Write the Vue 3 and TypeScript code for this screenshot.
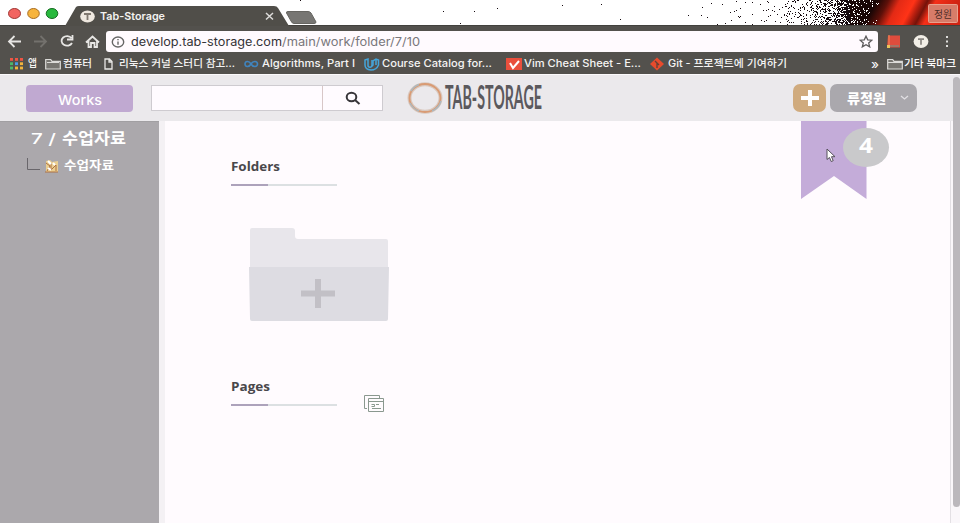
<script setup lang="ts">
import { h } from 'vue'

interface LabelProps { text: string; w: number; size: number; weight?: number; fill?: string; face?: string }

// Single-line label whose glyphs are fitted to a fixed width
const Label = (p: LabelProps) =>
  h('svg', { width: p.w, height: Math.round(p.size * 1.4), style: { overflow: 'visible', display: 'block', flex: 'none' } }, [
    h('text', {
      x: 0, y: Math.round(p.size * 1.06), textLength: p.w, lengthAdjust: 'spacingAndGlyphs',
      'font-size': p.size, 'font-weight': p.weight ?? 400, fill: p.fill ?? '#fff',
      'font-family': p.face ?? 'Inter, "Noto Sans CJK KR", sans-serif',
    }, p.text),
  ])
Label.props = ['text', 'w', 'size', 'weight', 'fill', 'face']

const bookmarks = [
  { icon: 'apps', text: '앱', w: 9 },
  { icon: 'dir', text: '컴퓨터', w: 29 },
  { icon: 'doc', text: '리눅스 커널 스터디 참고...', w: 116 },
  { icon: 'loop', text: 'Algorithms, Part I', w: 93 },
  { icon: 'udacity', text: 'Course Catalog for...', w: 110 },
  { icon: 'vim', text: 'Vim Cheat Sheet - E...', w: 117 },
  { icon: 'git', text: 'Git - 프로젝트에 기여하기', w: 119 },
]
const appColors = ['#ef5544', '#ef5544', '#ef5544', '#4bb86a', '#4a9ae8', '#f3b43c', '#4bb86a', '#f3b43c', '#f3b43c']

// Speckled wallpaper that fades from white into black
const dark: string[] = []
const light: string[] = []
let seed = 41
const rnd = () => ((seed = (seed * 16807) % 2147483647) / 2147483647)
for (let y = 0; y < 25; y++) {
  for (let x = 300; x < 880; x++) {
    const t = Math.max(0, Math.min(1, (x - 680) / 170))
    const p = 0.0012 + t * 0.03 + Math.pow(t, 6) * 0.75
    const r = rnd()
    if (x < 850 && r < p) dark.push(`M${x} ${y}h1v1h-1z`)
    if (x >= 838 && r > 1 - 0.32 * (1 - (x - 838) / 42)) light.push(`M${x} ${y}h1v1h-1z`)
  }
}
const darkPath = dark.join('')
const lightPath = light.join('')
</script>

<template>
  <div class="window">
    <div class="tabs">
      <svg width="960" height="26" viewBox="0 0 960 26">
        <defs>
          <linearGradient id="red" gradientUnits="userSpaceOnUse" x1="872" y1="10" x2="936" y2="44">
            <stop offset="0" stop-color="#190605" />
            <stop offset=".14" stop-color="#5d1009" />
            <stop offset=".28" stop-color="#e32a15" />
            <stop offset=".46" stop-color="#ff3317" />
            <stop offset=".54" stop-color="#b71f10" />
            <stop offset=".62" stop-color="#741209" />
            <stop offset=".72" stop-color="#f52f18" />
            <stop offset="1" stop-color="#cf2413" />
          </linearGradient>
        </defs>
        <path d="M0 0H960V26H0z" fill="#fff" />
        <path d="M850 0H960V26H850z" fill="#190706" />
        <path d="M872 0H960V26H860z" fill="url(#red)" />
        <path :d="darkPath" fill="#160b10" />
        <path :d="lightPath" fill="#fff" />
        <rect x="928.500" y="4.500" width="29" height="18" rx="1" fill="#d77c69" stroke="#e9a18e" />
        <path d="M0 25.500H960" stroke="#42413d" />
        <path d="M65 26L76 7Q77 6 79 6H274Q277 6 278 8L289 26z" fill="#504e49" />
        <path d="M288 11.500H308Q310 11.500 311 13L316 22Q316 23.500 314 23.500H294Q292 23.500 291 21L286.500 13Q286 11.500 288 11.500z" fill="#777673" stroke="#666561" />
        <g stroke-width="1">
          <ellipse cx="14.500" cy="13.500" rx="6" ry="5" fill="#f26460" stroke="#9f3632" />
          <ellipse cx="33.500" cy="13.500" rx="5.800" ry="5" fill="#f7b43c" stroke="#a76c20" />
          <ellipse cx="52" cy="13.500" rx="5.800" ry="5" fill="#28b93d" stroke="#176c23" />
        </g>
        <ellipse cx="87.500" cy="16.500" rx="7.300" ry="6" fill="#efe8df" />
        <path d="M84 14h7M87.500 14v6" stroke="#817970" stroke-width="1.800" />
        <path d="M266 13l7 6.500M273 13l-7 6.500" stroke="#dddcda" stroke-width="1.500" />
      </svg>
      <Label class="tab-title" text="Tab-Storage" :w="65" :size="10.500" :weight="600" fill="#f4f3f1" />
      <Label class="profile" text="정원" :w="18" :size="10" fill="#4d2d28" />
    </div>

    <div class="toolbar">
      <svg width="106" height="26" viewBox="0 0 106 26" fill="none" stroke="#e7e6e4" stroke-width="1.800">
        <path d="M21 15.500H9M14.500 10L9 15.500l5.500 5.500" />
        <path d="M34 15.500h12M40.500 10l5.500 5.500-5.500 5.500" stroke="#73716d" />
        <path d="M71.500 12A5.500 4.800 0 1 0 72 17M72.500 9v4.500H67" />
        <path d="M86 16.500l6.500-6 6.500 6M88.500 15v6h2.500v-4h3.500v4h2.500v-6" />
      </svg>
      <div class="address">
        <svg width="14" height="14" viewBox="0 0 14 14" fill="none" stroke="#666" stroke-width="1.400">
          <ellipse cx="7" cy="7" rx="5.700" ry="5" /><path d="M7 6.500v3.200M7 4v1.300" />
        </svg>
        <Label text="develop.tab-storage.com" :w="151" :size="11.500" fill="#343336" />
        <Label text="/main/work/folder/7/10" :w="138" :size="11.500" fill="#79777b" />
        <svg class="star" width="14" height="13" viewBox="0 0 14 13" fill="none" stroke="#5d5b5c" stroke-width="1.300">
          <path d="M7 1.200l1.700 3.600 4.200.4-3.200 2.700 1 4L7 9.800l-3.700 2.100 1-4L1.100 5.200l4.200-.4z" />
        </svg>
      </div>
      <svg class="extensions" width="80" height="26" viewBox="0 0 80 26">
        <path d="M10 9.500h12v12H9z" fill="#df4c3d" /><path d="M11 9v10" stroke="#f18c58" /><path d="M9 20h12" stroke="#8e8274" stroke-width="1.500" /><path d="M9 19h3v3H9z" fill="#ecc55a" />
        <ellipse cx="43" cy="15.500" rx="7.400" ry="6.400" fill="#f3efe7" /><path d="M40 13.200h6M43 13.200v5.500" stroke="#8a8782" stroke-width="1.700" />
        <path d="M68 10h2v2h-2zM68 14.500h2v2h-2zM68 19h2v2h-2z" fill="#dedddb" />
      </svg>
    </div>

    <div class="bookmarks">
      <div v-for="b in bookmarks" :key="b.text" class="bookmark">
        <svg class="glyph" :class="b.icon" height="14" viewBox="0 0 16 14" width="16" fill="none">
          <template v-if="b.icon === 'apps'">
            <rect v-for="(c, i) in appColors" :key="i" :x="(i % 3) * 5" :y="1 + Math.floor(i / 3) * 4.300" width="3" height="2.800" :fill="c" />
          </template>
          <g v-else-if="b.icon === 'dir'"><path d="M.7 11.500V2.500h5l1.300 1.800h8.300v7.700H.7z" fill="#777570" stroke="#dcdbd8" stroke-width="1.200" /><path d="M2 5.500h12" stroke="#dcdbd8" /></g>
          <path v-else-if="b.icon === 'doc'" d="M1 2h4.500L8 4.500V12H1zM5 2v3h3" stroke="#e8e7e5" stroke-width="1.300" />
          <path v-else-if="b.icon === 'loop'" d="M7 7C5 3.500 1 4 1 7s4 3.500 6 0 6.500-3 6.500 0-4.500 3.500-6.500 0" stroke="#4084be" stroke-width="1.600" />
          <g v-else-if="b.icon === 'udacity'" stroke="#45a5da" stroke-width="1.500"><path d="M1 3l3-1v7q2 3 5-1V4l3-2 2.500 1v5q-2 5-7.500 5Q1 12.500 1 8z" /><path d="M8 3v6M12 3v5" /></g>
          <g v-else-if="b.icon === 'vim'"><path d="M0 1h16v12H0z" fill="#e94f3d" /><path d="M4 6l3 5 6-7" stroke="#fff" stroke-width="2" /></g>
          <g v-else><path d="M7 .5l7 6.500-7 6.500L0 7z" fill="#e74b2d" /><path d="M5 4l4 4M7 6v5" stroke="#624035" stroke-width="1.300" /></g>
        </svg>
        <Label :text="b.text" :w="b.w" :size="10.500" :weight="500" fill="#f5f4f3" />
      </div>
      <div class="other">
        <Label text="»" :w="8" :size="13" />
        <svg width="16" height="14" viewBox="0 0 16 14"><path d="M.7 11.500V2.500h5l1.300 1.800h8.300v7.700H.7zM1 5.500h14" fill="#777570" stroke="#dcdbd8" stroke-width="1.200" /></svg>
        <Label text="기타 북마크" :w="52" :size="10.500" :weight="500" />
      </div>
    </div>

    <header class="header">
      <button class="works"><Label text="Works" :w="44" :size="13" :weight="500" face="Inter, sans-serif" /></button>
      <div class="search">
        <div class="field"></div>
        <div class="go">
          <svg width="16" height="14" viewBox="0 0 16 14" fill="none" stroke="#373539" stroke-width="2"><ellipse cx="6.500" cy="6" rx="4.800" ry="4.300" /><path d="M10 9l4.500 4" /></svg>
        </div>
      </div>
      <div class="brand">
        <svg width="38" height="34" viewBox="0 0 38 34" fill="none">
          <ellipse cx="18" cy="17" rx="15.500" ry="13.700" stroke="#d9c8be" stroke-width="4" />
          <ellipse cx="18" cy="17" rx="15.500" ry="14" stroke="#d99b74" stroke-width="1.800" />
          <path d="M4 10Q7 5 12 3.500M3 22Q6 28 12 30M25 30Q32 27 34 20" stroke="#adb8be" stroke-width="1.500" />
        </svg>
        <Label class="wordmark" text="TAB-STORAGE" :w="97" :size="32" :weight="700" fill="#5b595d" face="Lato, sans-serif" />
      </div>
      <button class="add"><svg width="18" height="16" viewBox="0 0 18 16"><path d="M9 0v16M0 8h18" stroke="#fff" stroke-width="4" /></svg></button>
      <button class="user">
        <Label text="류정원" :w="39" :size="13" :weight="800" />
        <svg width="9" height="6" viewBox="0 0 9 6"><path d="M1 1l3.500 3L8 1" fill="none" stroke="#e2e0e4" stroke-width="1.300" /></svg>
      </button>
    </header>

    <div class="body">
      <aside class="sidebar">
        <div class="crumb"><Label text="7 /" :w="25" :size="15" :weight="500" /><Label text="수업자료" :w="64" :size="16" :weight="700" /></div>
        <div class="leaf">
          <svg width="32" height="16" viewBox="0 0 32 16" fill="none">
            <path d="M.5 0v11.500H13" stroke="#69666b" />
            <path d="M19 3l4-1 2 2 6-1v11H19z" fill="#ebcf91" /><path d="M19 5l4 3-3 5M24 5v7l5-5v6M18 14h13" stroke="#ad7142" /><path d="M21 3l3 3M26 5l2 2M21 10l3 2" stroke="#fff" stroke-width="2" />
          </svg>
          <Label text="수업자료" :w="50" :size="12.500" :weight="700" />
        </div>
      </aside>
      <main class="content">
        <section class="folders">
          <Label text="Folders" :w="49" :size="12.500" :weight="700" fill="#49474b" face="'Open Sans', sans-serif" />
          <div class="rule"></div>
          <svg class="folder-art" width="140" height="94" viewBox="0 0 140 94">
            <path d="M1 40V2Q1 0 3 0H43Q46 0 46 3V8Q46 11 49 11H137Q139 11 139 13V40z" fill="#e8e6eb" />
            <path d="M0 39H140L139 91Q139 93 137 93H3Q1 93 1 91z" fill="#dddce2" />
            <path d="M69 51v29M52 65.500h34" stroke="#c2c0c6" stroke-width="6" />
          </svg>
        </section>
        <section class="pages">
          <div>
            <Label text="Pages" :w="39" :size="12.500" :weight="700" fill="#49474b" face="'Open Sans', sans-serif" />
            <div class="rule"></div>
          </div>
          <svg class="page-icon" width="21" height="18" viewBox="0 0 21 18" fill="none" stroke="#8a988f"><path d="M3 13.500H.5V.5h15v3M4.500 3.500h15v13h-15zM5 6.500h14M7.500 9.500h3v2h-3M12 9.500h3M8 13.500h9" /></svg>
        </section>
        <div class="saved">
          <svg width="66" height="78" viewBox="0 0 66 78"><path d="M0 0h65.500v78L33 55 0 78z" fill="#c4acd9" /></svg>
          <div class="badge"><Label text="4" :w="14" :size="21" :weight="700" face="'Open Sans', sans-serif" /></div>
          <svg class="cursor" width="10" height="15" viewBox="0 0 10 15"><path d="M1 1v10.500l2.500-2 1.700 4 2-.8-1.700-4H9z" fill="#fff" stroke="#555059" /></svg>
        </div>
      </main>
      <div class="scroll"><div class="thumb"></div></div>
    </div>
  </div>
</template>

<style scoped>
.window { width: 960px; height: 526px; overflow: hidden; background: #fff; display: flex; flex-direction: column; }
button { border: 0; padding: 0; margin: 0; display: flex; align-items: center; }
svg { display: block; flex: none; }
.tabs { height: 26px; position: relative; flex: none; }
.tab-title { position: absolute; left: 100px; top: 9px; }
.profile { position: absolute; left: 934px; top: 7px; }
.toolbar { height: 26px; flex: none; display: flex; background: #53514d; }
.address { width: 772px; height: 21px; margin-top: 5px; box-sizing: border-box; padding: 0 5px; border-radius: 3px; background: #fffafe; display: flex; align-items: center; }
.address > svg:first-child { margin-right: 6px; }
.star { margin-left: auto; }
.bookmarks { height: 22px; flex: none; box-sizing: border-box; padding: 1px 4px 0 10px; display: grid; grid-template-columns: 35px 59px 140px 120px 142px 144px 160px 1fr; background: #53514d; align-items: center; }
.bookmark { display: flex; align-items: center; gap: 2px; }
.glyph.doc { margin-right: -3px; }
.other { display: flex; align-items: center; justify-content: flex-end; gap: 1px; }
.other > svg:first-child { margin-right: 7px; }
.header { height: 47px; flex: none; box-sizing: border-box; border-top: 1px solid #fbf9fb; padding-right: 43px; background: #ebe9ec; display: flex; align-items: center; }
.works { margin-left: 26px; width: 107px; height: 27px; border-radius: 4px; justify-content: center; background: #c0a9d1; padding-top: 3px; box-sizing: border-box; }
.search { margin-left: 18px; width: 232px; height: 26px; box-sizing: border-box; border: 1px solid #cecbd0; display: flex; background: #fffbff; }
.field { width: 170px; border-right: 1px solid #d8c7c8; }
.go { flex: 1; display: flex; align-items: center; justify-content: center; }
.brand { margin-left: 24px; display: flex; align-items: center; }
.wordmark { margin-top: -1px; }
.add { margin-left: auto; width: 33px; height: 28px; border-radius: 7px; justify-content: center; background: #d0ab7e; }
.user { margin-left: 4px; width: 87px; height: 28px; box-sizing: border-box; padding: 0 8px 0 17px; border-radius: 7px; justify-content: space-between; background: #aaa8ad; }
.body { height: 402px; flex: none; display: flex; background: #fffbfe; }
.sidebar { width: 159px; flex: none; box-sizing: border-box; padding: 5px 0 0 31px; background: #aba8ac; border-top: 1px solid #a19fa2; }
.crumb { display: flex; gap: 6px; align-items: center; height: 22px; }
.leaf { display: flex; gap: 5px; align-items: center; margin: 8px 0 0 -4px; }
.content { position: relative; flex: 1; box-sizing: border-box; border-left: 6px solid #f4f1f4; padding: 37px 0 0 66px; }
.rule { width: 106px; height: 2px; margin-top: 8px; background: linear-gradient(90deg, #ada2bb 37px, #dce0e2 37px); }
.folder-art { margin: 42px 0 0 18px; }
.pages { display: flex; gap: 27px; margin-top: 56px; }
.page-icon { margin-top: 17px; }
.saved { position: absolute; left: 636px; top: 0; }
.badge { position: absolute; left: 42px; top: 7px; width: 46px; height: 39px; border-radius: 50%; display: flex; justify-content: center; background: #c9c9cb; padding-top: 3px; box-sizing: border-box; }
.cursor { position: absolute; left: 25px; top: 27px; }
.scroll { width: 10px; box-sizing: border-box; border-left: 1px solid #e3e0e4; background: #faf7fa; }
.thumb { margin: -44px 0 0 2px; height: 430px; border-radius: 4px; background: #bbb8bc; }
</style>
